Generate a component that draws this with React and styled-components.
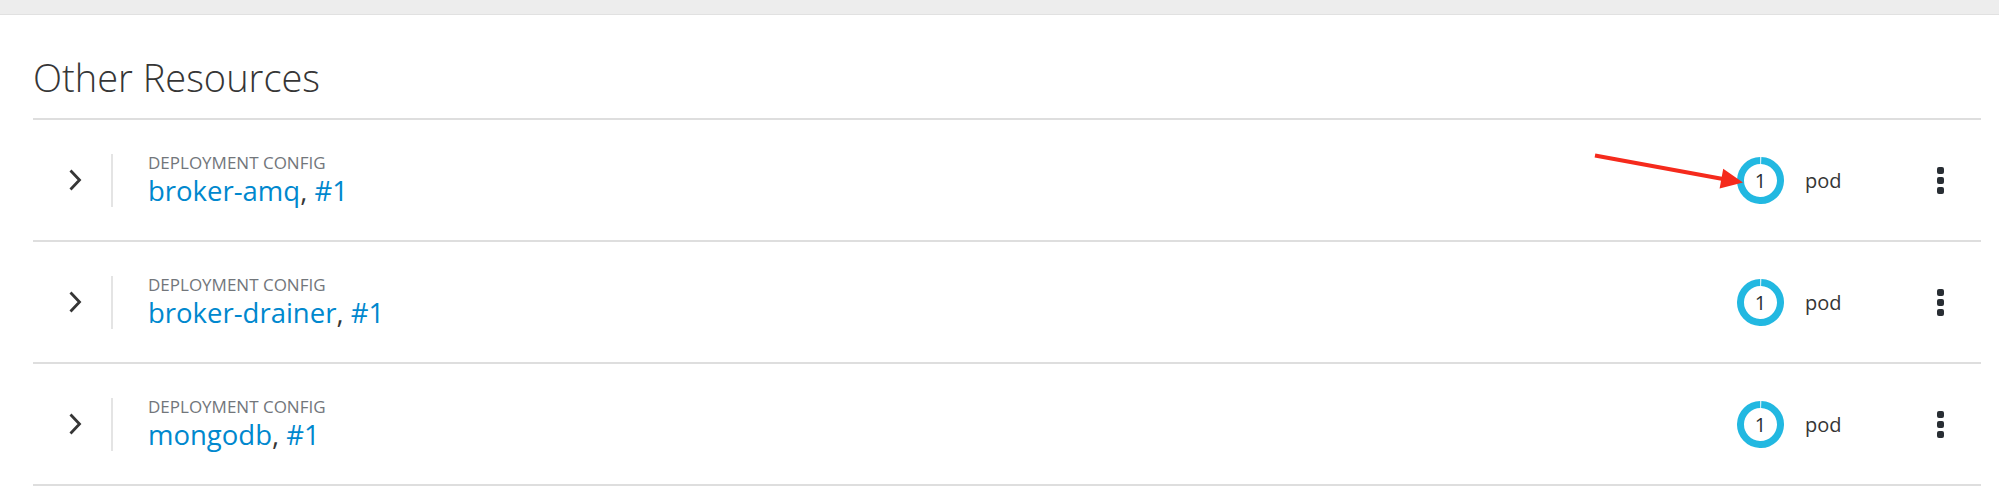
import React from 'react'
import styled, { createGlobalStyle } from 'styled-components'

const GlobalStyle = createGlobalStyle`
  html, body {
    margin: 0;
    padding: 0;
    background: #fff;
    font-family: "Open Sans", "Noto Sans", sans-serif;
    color: #363636;
  }
`

const TopBar = styled.div`
  height: 14px;
  background: #ededed;
  border-bottom: 1px solid #e1e1e1;
`

const Section = styled.section`
  padding: 0 18px 0 33px;
`

const Title = styled.h2`
  margin: 41px 0 20px;
  font-size: 38px;
  line-height: 42px;
  font-weight: 300;
  color: #363636;
`

const List = styled.div`
  border-top: 2px solid #dedede;
`

const Row = styled.div`
  display: flex;
  align-items: center;
  height: 120px;
  border-bottom: 2px solid #dedede;
  padding-right: 26px;
`

const Toggle = styled.div`
  display: flex;
  align-items: center;
  padding-left: 35px;
  width: 14px;
  height: 22px;
`

const Content = styled.div`
  margin-left: 29px;
  padding-left: 35px;
  border-left: 2px solid #e4e4e4;
  height: 53px;
  display: flex;
  flex-direction: column;
  justify-content: center;
`

const Kind = styled.div`
  font-size: 17px;
  line-height: 20px;
  color: #72767b;
  text-transform: uppercase;
`

const Name = styled.div`
  margin-top: 1px;
  font-size: 27.5px;
  line-height: 33px;
  color: #363636;
`

const Link = styled.a`
  color: #0088ce;
  text-decoration: none;
`

const Status = styled.div`
  margin-left: auto;
  display: flex;
  align-items: center;
`

const Donut = styled.div`
  position: relative;
  width: 47px;
  height: 47px;
  display: flex;
  align-items: center;
  justify-content: center;
`

const DonutCount = styled.span`
  position: absolute;
  font-size: 20px;
  color: #292e34;
`

const PodLabel = styled.span`
  margin-left: 21px;
  width: 120px;
  font-size: 20px;
  color: #363636;
`

const Kebab = styled.button`
  width: 30px;
  height: 30px;
  padding: 0;
  border: 0;
  background: none;
  display: flex;
  flex-direction: column;
  align-items: center;
  justify-content: center;
  gap: 3px;
`

const Dot = styled.span`
  width: 7px;
  height: 7px;
  border-radius: 2px;
  background: #292e34;
`

const Arrow = styled.svg`
  position: absolute;
  left: -150px;
  top: -10px;
  overflow: visible;
`

const Chevron = () => (
  <svg width="14" height="22" viewBox="0 0 14 22">
    <polyline points="2.5,1.5 11.5,11 2.5,20.5" fill="none" stroke="#363636" strokeWidth="2.8" />
  </svg>
)

const DonutRing = () => {
  const r = 20
  const c = 2 * Math.PI * r
  return (
    <svg width="47" height="47" viewBox="0 0 47 47">
      <circle
        cx="23.5"
        cy="23.5"
        r={r}
        fill="none"
        stroke="#22b8e1"
        strokeWidth="7"
        strokeDasharray={`${c - 1.8} 1.8`}
        transform="rotate(-88 23.5 23.5)"
      />
    </svg>
  )
}

const resources = [
  { name: 'broker-amq', pointer: true },
  { name: 'broker-drainer' },
  { name: 'mongodb' },
]

export default function App() {
  return (
    <>
      <GlobalStyle />
      <TopBar />
      <Section>
        <Title>Other Resources</Title>
        <List>
          {resources.map((res) => (
            <Row key={res.name}>
              <Toggle>
                <Chevron />
              </Toggle>
              <Content>
                <Kind>Deployment Config</Kind>
                <Name>
                  <Link href="#">{res.name}</Link>, <Link href="#">#1</Link>
                </Name>
              </Content>
              <Status>
                <Donut>
                  <DonutRing />
                  <DonutCount>1</DonutCount>
                  {res.pointer && (
                    <Arrow width="160" height="45" viewBox="0 0 160 45">
                      <line x1="8" y1="8.5" x2="136" y2="32" stroke="#f52a1c" strokeWidth="4" />
                      <polygon points="156,35.5 132.6,41.4 136.2,21.7" fill="#f52a1c" />
                    </Arrow>
                  )}
                </Donut>
                <PodLabel>pod</PodLabel>
              </Status>
              <Kebab aria-label="Actions">
                <Dot />
                <Dot />
                <Dot />
              </Kebab>
            </Row>
          ))}
        </List>
      </Section>
    </>
  )
}
